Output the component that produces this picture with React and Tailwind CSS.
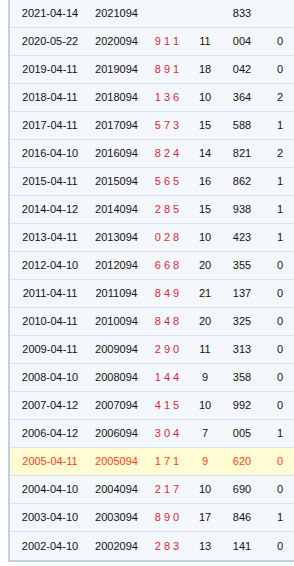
import React from "react";

const rows = [
  ["2021-04-14", "2021094", "", "", "833", ""],
  ["2020-05-22", "2020094", "911", "11", "004", "0"],
  ["2019-04-11", "2019094", "891", "18", "042", "0"],
  ["2018-04-11", "2018094", "136", "10", "364", "2"],
  ["2017-04-11", "2017094", "573", "15", "588", "1"],
  ["2016-04-10", "2016094", "824", "14", "821", "2"],
  ["2015-04-11", "2015094", "565", "16", "862", "1"],
  ["2014-04-12", "2014094", "285", "15", "938", "1"],
  ["2013-04-11", "2013094", "028", "10", "423", "1"],
  ["2012-04-10", "2012094", "668", "20", "355", "0"],
  ["2011-04-11", "2011094", "849", "21", "137", "0"],
  ["2010-04-11", "2010094", "848", "20", "325", "0"],
  ["2009-04-11", "2009094", "290", "11", "313", "0"],
  ["2008-04-10", "2008094", "144", "9", "358", "0"],
  ["2007-04-12", "2007094", "415", "10", "992", "0"],
  ["2006-04-12", "2006094", "304", "7", "005", "1"],
  ["2005-04-11", "2005094", "171", "9", "620", "0"],
  ["2004-04-10", "2004094", "217", "10", "690", "0"],
  ["2003-04-10", "2003094", "890", "17", "846", "1"],
  ["2002-04-10", "2002094", "283", "13", "141", "0"],
];

export default function App() {
  return (
    <div className="w-[294px] h-[566px] bg-white overflow-hidden" style={{ fontFamily: '"Liberation Sans", Arial, sans-serif' }}>
      <div className="ml-[8px] w-[300px] border-l-2 border-b-2 border-[#bfd0e2] bg-[#f4f8fd]">
        {rows.map((r, i) => {
          const hl = r[0] === "2005-04-11";
          const txt = hl ? "text-[#ff3c1a]" : "text-[#111]";
          return (
            <div
              key={i}
              className={`flex h-[28px] items-center text-[11px] border-b border-[#dde3ea] last:border-b-0 ${hl ? "bg-[#fffbd2]" : ""}`}
            >
              <div className={`w-[80px] text-center ${txt}`}>{r[0]}</div>
              <div className={`w-[53px] text-center ${txt}`}>{r[1]}</div>
              <div className={`w-[48px] text-center ${hl ? "text-[#ff3c1a]" : "text-[#d7253f]"}`}>
                {r[2] ? r[2].split("").join(" ") : ""}
              </div>
              <div className={`w-[28px] text-center ${txt}`}>{r[3]}</div>
              <div className={`w-[46px] text-center ${txt}`}>{r[4]}</div>
              <div className={`w-[30px] text-center ${txt}`}>{r[5]}</div>
            </div>
          );
        })}
      </div>
    </div>
  );
}
